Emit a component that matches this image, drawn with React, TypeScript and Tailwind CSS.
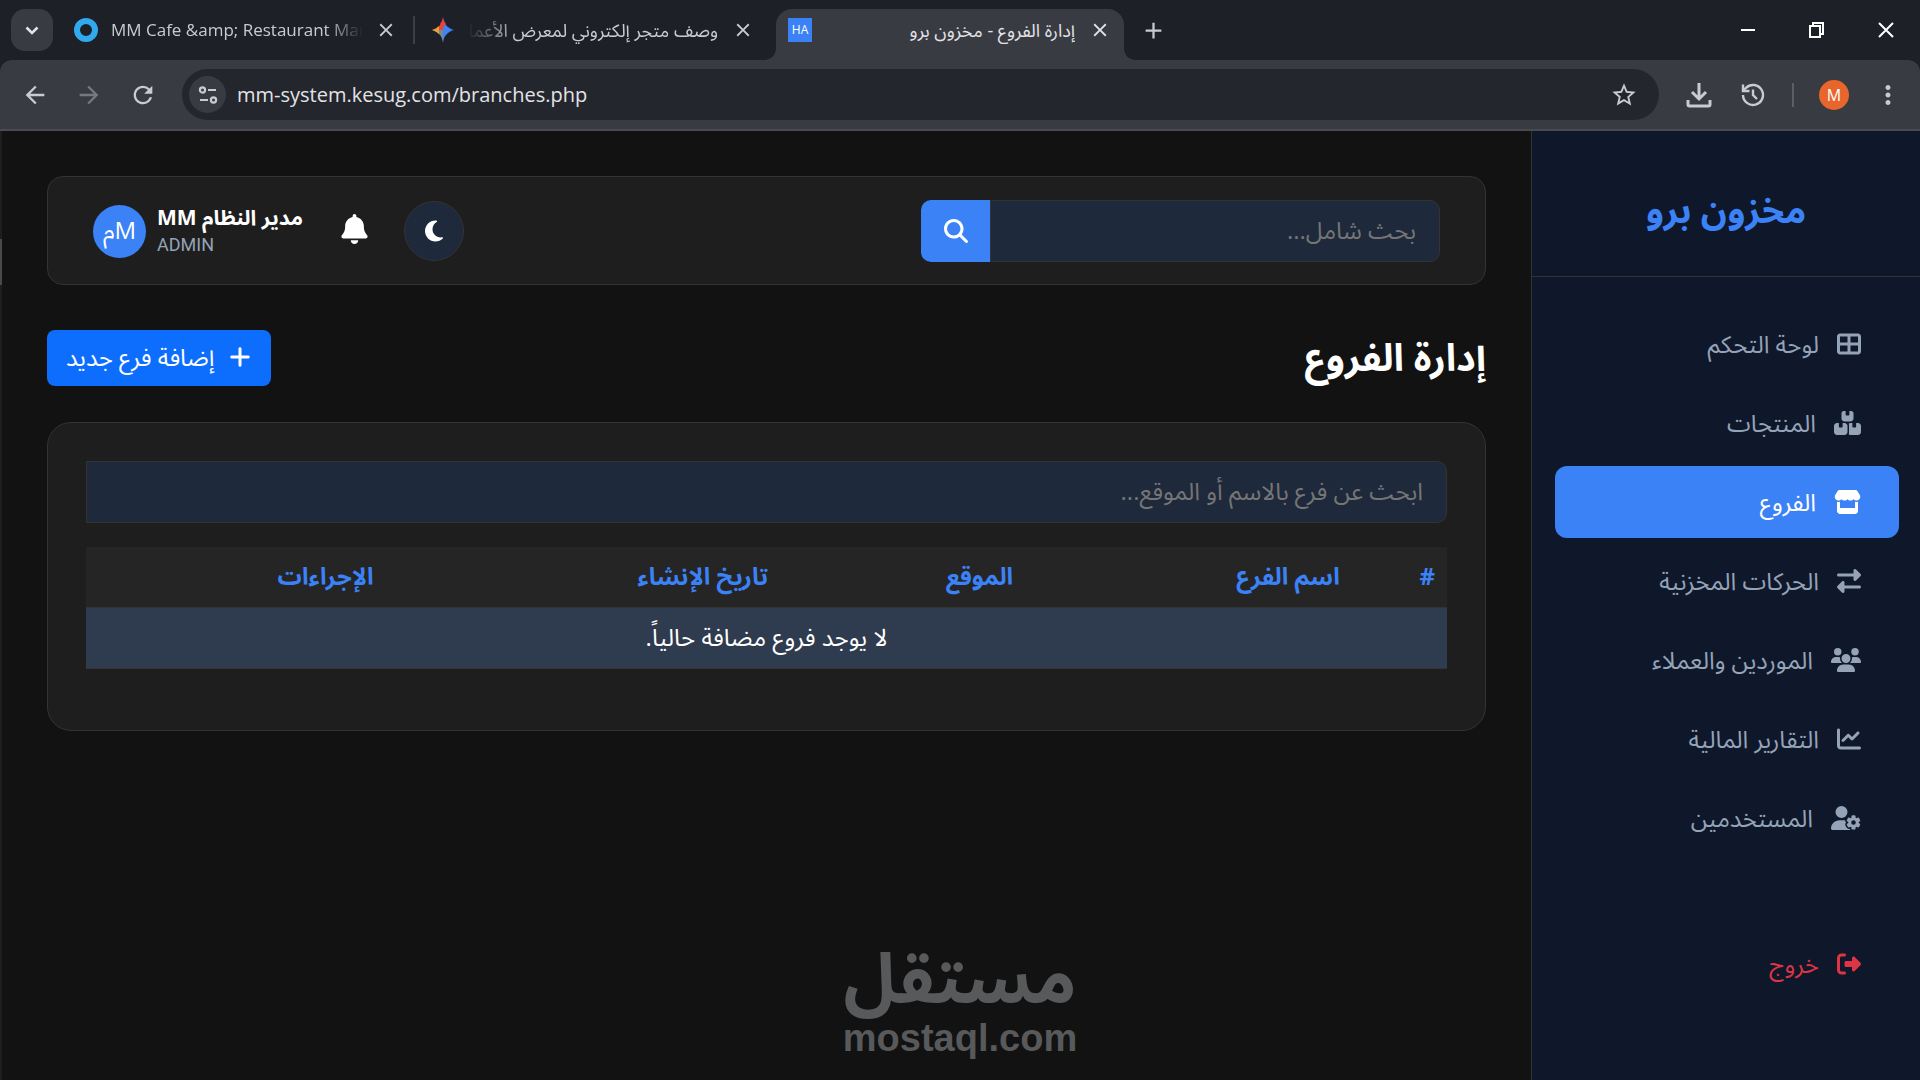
import React, { useState } from 'react';
import {
  FaBell,
  FaBoxesStacked,
  FaChartLine,
  FaMagnifyingGlass,
  FaMoon,
  FaPlus,
  FaRightFromBracket,
  FaRightLeft,
  FaStore,
  FaTableCellsLarge,
  FaUserGear,
  FaUsers,
} from 'react-icons/fa6';
import { MdAdd, MdArrowBack, MdArrowForward, MdClose, MdMoreVert, MdRefresh, MdStarBorder } from 'react-icons/md';

// Font Awesome glyphs share a height but not a width
const navItems = [
  { label: 'لوحة التحكم', icon: FaTableCellsLarge, iconWidth: 'w-6' },
  { label: 'المنتجات', icon: FaBoxesStacked, iconWidth: 'w-[27px]' },
  { label: 'الفروع', icon: FaStore, iconWidth: 'w-[27px]', active: true },
  { label: 'الحركات المخزنية', icon: FaRightLeft, iconWidth: 'w-6' },
  { label: 'الموردين والعملاء', icon: FaUsers, iconWidth: 'w-[30px]' },
  { label: 'التقارير المالية', icon: FaChartLine, iconWidth: 'w-6' },
  { label: 'المستخدمين', icon: FaUserGear, iconWidth: 'w-[30px]' },
];

const columns = [
  { label: '#', width: 'w-[7%]' },
  { label: 'اسم الفرع', width: 'w-[24%]' },
  { label: 'الموقع', width: 'w-[18%]' },
  { label: 'تاريخ الإنشاء', width: 'w-[29%]' },
  { label: 'الإجراءات', width: 'w-[22%]' },
];

const TabStrip: React.FC = () => (
  <div className="flex h-[60px] items-center pl-[11px] text-[#c9cbd0]">
    <button aria-label="Search tabs" className="flex h-[42px] w-[42px] shrink-0 items-center justify-center rounded-[14px] bg-[#393b43] text-[#e3e3e6]">
      <svg width="14" height="9" viewBox="0 0 14 9" fill="none" stroke="currentColor" strokeWidth="2.6">
        <path d="M1.5 1.5 7 7l5.5-5.5" />
      </svg>
    </button>

    <div className="ml-5 flex w-[342px] items-center border-r-2 border-[#3c3f46]">
      <svg width="26" height="26" viewBox="0 0 26 26" className="shrink-0">
        <circle cx="13" cy="13" r="9" fill="none" stroke="#32a9ee" strokeWidth="6" />
      </svg>
      <span className="ml-3 flex-1 overflow-hidden text-[17px] leading-7 whitespace-nowrap [mask-image:linear-gradient(to_right,#000_85%,transparent)]">
        {'MM Cafe &amp; Restaurant Management'}
      </span>
      <button aria-label="Close tab" className="mr-4 ml-3 shrink-0">
        <MdClose size={22} />
      </button>
    </div>

    <div className="flex w-[361px] items-center pl-4">
      <svg width="24" height="28" viewBox="0 0 24 28" className="shrink-0">
        <path d="M12 1c1 7 4 11 11 13-7 2-10 6-11 13V1Z" fill="#3f83f8" />
        <path d="M12 1v13H1c7-2 10-6 11-13Z" fill="#e5433b" />
        <path d="M1 14h11v13C11 20 8 16 1 14Z" fill="#7a8a84" />
        <path d="M1 14c3-1 5-2 7-4v8c-2-2-4-3-7-4Z" fill="#e8a13a" />
        <path d="M9 8c2-3 3-4 3-7 0 3 1 4 3 7l-3 4Z" fill="#e5433b" />
      </svg>
      <span dir="rtl" className="ml-3 flex-1 overflow-hidden text-lg leading-7 whitespace-nowrap [mask-image:linear-gradient(to_left,#000_80%,transparent)]">
        وصف متجر إلكتروني لمعرض الأعمال
      </span>
      <button aria-label="Close tab" className="mr-[22px] ml-[14px] shrink-0">
        <MdClose size={22} />
      </button>
    </div>

    <div className="relative flex h-[51px] w-[348px] items-center self-end rounded-t-2xl bg-[#393b43] pb-[9px] pl-3 text-[#e3e3e6]">
      <svg width="12" height="12" viewBox="0 0 12 12" className="absolute bottom-0 -left-3 text-[#393b43]">
        <path d="M12 0v12H0C7 12 12 7 12 0Z" fill="currentColor" />
      </svg>
      <svg width="12" height="12" viewBox="0 0 12 12" className="absolute -right-3 bottom-0 text-[#393b43]">
        <path d="M0 0v12h12C5 12 0 7 0 0Z" fill="currentColor" />
      </svg>
      <span className="flex h-6 w-6 shrink-0 items-center justify-center bg-[#3b82f6] text-xs text-white">HA</span>
      <span dir="rtl" className="ml-3 flex-1 overflow-hidden text-lg leading-7 whitespace-nowrap">إدارة الفروع - مخزون برو</span>
      <button aria-label="Close tab" className="mr-[13px] ml-[14px] shrink-0">
        <MdClose size={22} />
      </button>
    </div>

    <button aria-label="New tab" className="ml-4">
      <MdAdd size={27} />
    </button>

    <div className="ml-auto flex items-center gap-[51px] pr-[25px] text-white">
      <button aria-label="Minimize">
        <svg width="18" height="18" viewBox="0 0 18 18" stroke="currentColor" strokeWidth="2">
          <path d="M2 9h14" />
        </svg>
      </button>
      <button aria-label="Restore">
        <svg width="18" height="18" viewBox="0 0 18 18" fill="none" stroke="currentColor" strokeWidth="2">
          <path d="M2 5h10v11H2zM5 5V2h10v11h-3" />
        </svg>
      </button>
      <button aria-label="Close">
        <svg width="18" height="18" viewBox="0 0 18 18" stroke="currentColor" strokeWidth="2">
          <path d="m2 2 14 14M16 2 2 16" />
        </svg>
      </button>
    </div>
  </div>
);

const Toolbar: React.FC = () => (
  <div className="flex h-[71px] items-center rounded-t-xl border-b-2 border-[#494b50] bg-[#393b43] pl-[21px] text-[#c9cbd0]">
    <button aria-label="Back">
      <MdArrowBack size={28} />
    </button>
    <button aria-label="Forward" disabled className="ml-[26px] text-[#77797f]">
      <MdArrowForward size={28} />
    </button>
    <button aria-label="Reload" className="ml-[26px]">
      <MdRefresh size={28} />
    </button>

    <div className="ml-[25px] flex h-[51px] flex-1 items-center rounded-full bg-[#24262d] pr-[21px] pl-[7px]">
      <button aria-label="Site information" className="flex h-[37px] w-[37px] shrink-0 items-center justify-center rounded-full bg-[#393b43]">
        <svg width="20" height="20" viewBox="0 0 20 20" fill="none" stroke="currentColor" strokeWidth="2.2">
          <circle cx="4.5" cy="5" r="2.6" />
          <path d="M10 5h8M2 15h8" />
          <circle cx="15.5" cy="15" r="2.6" />
        </svg>
      </button>
      <input
        aria-label="Address"
        defaultValue="mm-system.kesug.com/branches.php"
        className="ml-[11px] min-w-0 flex-1 bg-transparent text-xl text-[#e3e3e6] outline-none"
      />
      <button aria-label="Bookmark this page">
        <MdStarBorder size={28} />
      </button>
    </div>

    <div className="ml-[27px] flex items-center">
      <button aria-label="Downloads">
        <svg width="26" height="26" viewBox="0 0 26 26" fill="none" stroke="currentColor" strokeWidth="3">
          <path d="M13 1v15M6 10l7 7 7-7" />
          <path d="M2 18v4.500a1.500 1.500 0 0 0 1.500 1.500h19a1.500 1.500 0 0 0 1.500-1.500V18" />
        </svg>
      </button>
      <button aria-label="History" className="ml-7">
        <svg width="26" height="26" viewBox="0 0 26 26" fill="none" stroke="currentColor" strokeWidth="2.4">
          <path d="M3 13a10 10 0 1 0 3-7.200L3 9" />
          <path d="M3 2.500V9h6.500M13 7.500V13l4 4" />
        </svg>
      </button>
      <span className="ml-[26px] h-6 w-[2px] bg-[#5c5e65]" />
      <span className="ml-[25px] flex h-[30px] w-[30px] items-center justify-center rounded-full bg-[#e8662b] text-base text-white">M</span>
      <button aria-label="Menu" className="mr-[17px] ml-[24px]">
        <MdMoreVert size={30} />
      </button>
    </div>
  </div>
);

const Sidebar: React.FC = () => (
  <aside className="flex w-[389px] shrink-0 flex-col border-l border-[#333] bg-[#0f172a] text-[#94a3b8]">
    <div className="flex h-[146px] items-center justify-center border-b border-[#333] pt-3">
      <h1 className="text-4xl font-bold text-[#3b82f6]">مخزون برو</h1>
    </div>
    <nav className="flex flex-col gap-[7px] pt-[31px] pr-[21px] pl-[23px]">
      {navItems.map((item) => (
        <a
          key={item.label}
          href="#"
          className={`flex h-[72px] items-center gap-[18px] rounded-xl px-[38px] text-2xl ${item.active ? 'bg-[#3b82f6] text-white' : ''}`}
        >
          <item.icon className={`h-6 shrink-0 ${item.iconWidth}`} />
          <span>{item.label}</span>
        </a>
      ))}
      <a href="#" className="mt-[67px] flex h-[72px] items-center gap-[18px] px-[38px] text-2xl text-[#dc3545]">
        <FaRightFromBracket size={24} className="shrink-0" />
        <span>خروج</span>
      </a>
    </nav>
  </aside>
);

const TopBar: React.FC = () => (
  <header className="flex items-center justify-between rounded-2xl border border-[#333] bg-[#1e1e1e] px-[45px] pt-[23px] pb-[22px]">
    <form className="flex w-[519px]" onSubmit={(e) => e.preventDefault()}>
      <input
        type="search"
        aria-label="بحث شامل"
        placeholder="بحث شامل..."
        className="h-[62px] min-w-0 flex-1 rounded-r-[10px] border border-[#333] bg-[#1e293b] px-[23px] pb-1 text-2xl outline-none placeholder:text-[#757575]"
      />
      <button aria-label="بحث" className="flex w-[69px] items-center justify-center rounded-l-[10px] bg-[#3b82f6] text-white">
        <FaMagnifyingGlass size={24} />
      </button>
    </form>

    <div className="flex items-center">
      <button aria-label="الوضع الليلي" className="flex h-[60px] w-[60px] items-center justify-center rounded-full border border-[#333] bg-[#1e293b] text-white">
        <FaMoon size={24} />
      </button>
      <button aria-label="الإشعارات" className="mr-9 mb-1 text-white">
        <FaBell size={30} className="w-[27px]" />
      </button>
      <div className="mr-9 flex flex-row-reverse items-center gap-[11px]">
        <span className="flex h-[53px] w-[53px] items-center justify-center rounded-full bg-[#3b82f6] pb-[2px] text-2xl text-white">Mم</span>
        <div dir="ltr" className="w-[148px]">
          <p className="text-[21px] leading-7 font-bold whitespace-nowrap text-white">MM مدير النظام</p>
          <p className="font-['Roboto',sans-serif] text-lg leading-7 text-[#94a3b8]">ADMIN</p>
        </div>
      </div>
    </div>
  </header>
);

const BranchesCard: React.FC = () => {
  const [query, setQuery] = useState<string>('');

  return (
    <section className="mt-9 rounded-3xl border border-[#333] bg-[#1e1e1e] px-[38px] pt-[38px] pb-[61px]">
      <input
        type="search"
        value={query}
        onChange={(e) => setQuery(e.target.value)}
        aria-label="ابحث عن فرع"
        placeholder="ابحث عن فرع بالاسم أو الموقع..."
        className="block h-[62px] w-full rounded-r-[10px] border border-[#333] bg-[#1e293b] px-[23px] pb-1 text-2xl outline-none placeholder:text-[#757575]"
      />
      <table className="mt-6 w-full table-fixed text-2xl leading-9">
        <thead>
          <tr className="border-b border-[#333] bg-[#252525] text-[#3b82f6]">
            {columns.map((col) => (
              <th key={col.label} className={`px-3 pt-[11px] pb-[13px] text-right font-bold ${col.width}`}>
                {col.label}
              </th>
            ))}
          </tr>
        </thead>
        <tbody>
          <tr className="border-b border-[#333] bg-[#2f3b4e] text-white">
            <td colSpan={5} className="pt-[11px] pb-[13px] text-center">لا يوجد فروع مضافة حالياً.</td>
          </tr>
        </tbody>
      </table>
    </section>
  );
};

const App: React.FC = () => {
  return (
    <div className="relative flex min-h-screen flex-col bg-[#1d2027] font-['Open_Sans','Noto_Sans_Arabic','DejaVu_Sans_Condensed','DejaVu_Sans',sans-serif]">
      <TabStrip />
      <Toolbar />

      <div className="flex flex-1 bg-[#121212]">
        <div className="w-[2px] shrink-0 bg-[#1e1e1e] pt-[108px]">
          <div className="h-[46px] bg-[#4a4a4a]" />
        </div>
        <div dir="rtl" className="flex min-w-0 flex-1">
          <Sidebar />
          <main className="min-w-0 flex-1 p-[45px]">
            <TopBar />
            <div className="mt-[45px] flex h-14 items-center justify-between">
              <h2 className="pb-1 text-[38px] leading-[52px] font-bold text-white">إدارة الفروع</h2>
              <button className="flex h-14 items-center gap-[14px] rounded-lg bg-[#0d6efd] px-[19px] pb-[2px] text-2xl text-white">
                <FaPlus size={24} />
                إضافة فرع جديد
              </button>
            </div>
            <BranchesCard />
          </main>
        </div>
      </div>

      {/* Watermark over the page */}
      <div className="pointer-events-none absolute inset-x-0 bottom-5 flex flex-col items-center font-bold text-[#58595b]">
        <span className="text-[70px] leading-[80px]">مستقل</span>
        <span className="font-['Liberation_Sans',sans-serif] text-[38px] leading-[44px]">mostaql.com</span>
      </div>
    </div>
  );
};

export default App;
